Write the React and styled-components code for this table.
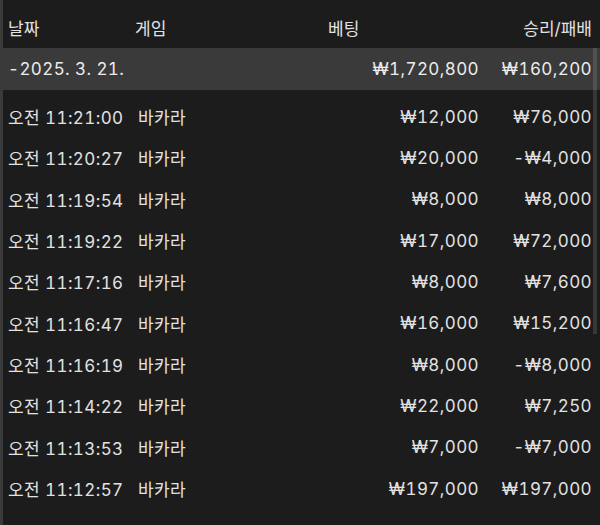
import styled, { createGlobalStyle } from "styled-components"

const GlobalStyle = createGlobalStyle`
  html, body {
    margin: 0;
    padding: 0;
    background: #1c1c1c;
  }
  body {
    font-family: Inter, "Noto Sans CJK KR", sans-serif;
  }
`

//DATA
const rows = [
  { time: "오전 11:21:00", game: "바카라", bet: "₩12,000", result: "₩76,000" },
  { time: "오전 11:20:27", game: "바카라", bet: "₩20,000", result: "-₩4,000" },
  { time: "오전 11:19:54", game: "바카라", bet: "₩8,000", result: "₩8,000" },
  { time: "오전 11:19:22", game: "바카라", bet: "₩17,000", result: "₩72,000" },
  { time: "오전 11:17:16", game: "바카라", bet: "₩8,000", result: "₩7,600" },
  { time: "오전 11:16:47", game: "바카라", bet: "₩16,000", result: "₩15,200" },
  { time: "오전 11:16:19", game: "바카라", bet: "₩8,000", result: "-₩8,000" },
  { time: "오전 11:14:22", game: "바카라", bet: "₩22,000", result: "₩7,250" },
  { time: "오전 11:13:53", game: "바카라", bet: "₩7,000", result: "-₩7,000" },
  { time: "오전 11:12:57", game: "바카라", bet: "₩197,000", result: "₩197,000" },
]

export default function App() {

  return (

    <>
      <GlobalStyle />

      <Panel>

        <HeaderRow>
          <Cell>날짜</Cell>
          <Cell>게임</Cell>
          <Cell>베팅</Cell>
          <Cell $right>승리/패배</Cell>
        </HeaderRow>

        <GroupRow>
          <Cell>-2025. 3. 21.</Cell>
          <Cell />
          <Cell $right>₩1,720,800</Cell>
          <Cell $right>₩160,200</Cell>
        </GroupRow>

        <Body>
          {rows.map((row, index) => (
            <Row key={index}>
              <Cell>{row.time}</Cell>
              <Cell $indent>{row.game}</Cell>
              <Cell $right>{row.bet}</Cell>
              <Cell $right>{row.result}</Cell>
            </Row>
          ))}
        </Body>

        <ScrollThumb />

      </Panel>
    </>

  )

}

//STYLES

const Panel = styled.div`
  position: relative;
  width: 600px;
  height: 525px;
  box-sizing: border-box;
  border-left: 3px solid #3a3a3a;
  background: #1c1c1c;
  color: #e2e2e2;
  overflow: hidden;
`
const Grid = styled.div`
  display: grid;
  grid-template-columns: 127px 193px 151px 113px;
  align-items: center;
  padding: 0 8px 0 5px;
  font-size: 17px;
  font-variant-numeric: tabular-nums;
  letter-spacing: 0.4px;
  white-space: nowrap;
`
const HeaderRow = styled(Grid)`
  height: 48px;
  padding-top: 6px;
  box-sizing: border-box;
  letter-spacing: 0;
`
const GroupRow = styled(Grid)`
  height: 42px;
  background: #3a3a3a;
  color: #ececec;
`
const Body = styled.div`
  padding-top: 6px;
`
const Row = styled(Grid)`
  height: 41.33px;
`
const Cell = styled.div`
  text-align: ${props => props.$right ? "right" : "left"};
  padding-left: ${props => props.$indent ? "3px" : "0"};
`
const ScrollThumb = styled.div`
  position: absolute;
  top: 48px;
  right: 3px;
  width: 4px;
  height: 286px;
  background: rgba(255, 255, 255, 0.12);
`
